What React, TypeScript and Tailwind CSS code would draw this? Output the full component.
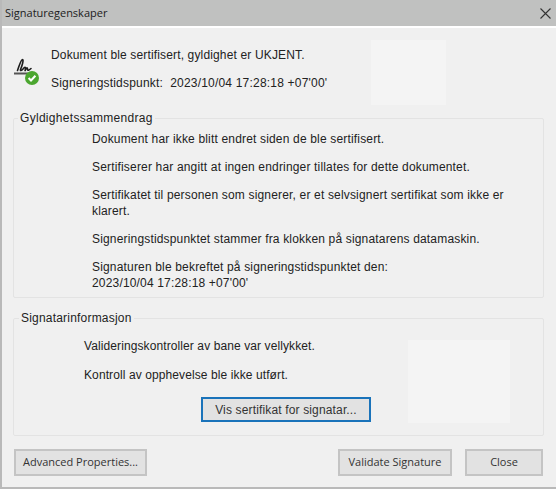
const summary = [
  { text: "Dokument har ikke blitt endret siden de ble sertifisert.", cls: "mt-[6px]" },
  { text: "Sertifiserer har angitt at ingen endringer tillates for dette dokumentet.", cls: "mt-[12px]" },
  { text: "Sertifikatet til personen som signerer, er et selvsignert sertifikat som ikke er klarert.", cls: "mt-[12px]" },
  { text: "Signeringstidspunktet stammer fra klokken på signatarens datamaskin.", cls: "mt-[12px]" },
];

function SignatureIcon() {
  return (
    <svg width="28" height="30" viewBox="0 0 28 30" className="shrink-0">
      <path d="M5.5 13.5 C7.5 8 9 2.5 10.5 2.5 C12 2.5 10 9 8.5 12.5 C8 14 9.5 14 11 12 C12 10.5 13.5 9.5 13.5 11 C13.5 12.5 12.8 14 13.2 13.5 C14 11 15.5 10 15.5 12 C15.5 14 17 13.5 19 11.5" fill="none" stroke="#1c1c1c" strokeWidth="1.6" strokeLinecap="round" />
      <rect x="2" y="15.5" width="14" height="2" fill="#555" />
      <circle cx="20" cy="21" r="7" fill="#4ba62f" />
      <path d="M16.6 21 L19 23.5 L23.4 18.8" fill="none" stroke="#fff" strokeWidth="2" />
    </svg>
  );
}

function DialogButton({ label, cls }: { label: string; cls: string }) {
  return (
    <button type="button" className={`h-[27px] border-2 border-[#c4c4c4] bg-[#e2e2e2] font-['Open_Sans',sans-serif] text-[11px] text-[#333] ${cls}`}>
      {label}
    </button>
  );
}

export default function App() {
  return (
    <div className="relative flex h-[489px] w-[556px] flex-col overflow-hidden border-b-2 border-l-2 border-[#b9b9b9] bg-[#f0f0f0] font-['Liberation_Sans',sans-serif] text-[12px] text-[#222]">
      <div className="-ml-[2px] flex h-[26px] shrink-0 items-center justify-between bg-[#c0c1c0] pl-[5px] pr-[5px]">
        <span className="font-['Open_Sans',sans-serif] text-[11px] text-[#1c1c1c]">Signaturegenskaper</span>
        <svg width="11" height="11" viewBox="0 0 11 11">
          <path d="M0.5 0.5 L10.5 10.5 M10.5 0.5 L0.5 10.5" stroke="#333" strokeWidth="1.1" />
        </svg>
      </div>
      <div className="h-[2px] shrink-0 bg-white" />

      <div className="flex items-start pl-[10px] pt-[20px]">
        <div className="pt-[9px]"><SignatureIcon /></div>
        <div className="pl-[11px]">
          <p className="leading-[14px] tracking-[0.15px]">Dokument ble sertifisert, gyldighet er UKJENT.</p>
          <p className="mt-[14px] leading-[14px] tracking-[0.2px]">Signeringstidspunkt:&nbsp; 2023/10/04 17:28:18 +07'00'</p>
        </div>
      </div>

      <fieldset className="ml-[11px] mt-[21px] h-[187px] w-[531px] rounded-[2px] border border-[#e3e3e3]">
        <legend className="ml-[4px] px-[2px] leading-[14px] tracking-[0.3px]">Gyldighetssammendrag</legend>
        <div className="pl-[78px] pr-[30px] tracking-[0.17px]">
          {summary.map((item) => (
            <p key={item.text} className={`leading-[16px] ${item.cls}`}>{item.text}</p>
          ))}
          <p className="mt-[12px] leading-[16px]">
            Signaturen ble bekreftet på signeringstidspunktet den:
            <br />
            2023/10/04 17:28:18 +07'00'
          </p>
        </div>
      </fieldset>

      <fieldset className="ml-[11px] mt-[13px] h-[125px] w-[531px] rounded-[2px] border border-[#e3e3e3]">
        <legend className="ml-[5px] px-[2px] leading-[14px] tracking-[0.2px]">Signatarinformasjon</legend>
        <div className="pl-[70px] tracking-[0.1px]">
          <p className="mt-[14px] leading-[14px]">Valideringskontroller av bane var vellykket.</p>
          <p className="mt-[15px] leading-[14px]">Kontroll av opphevelse ble ikke utført.</p>
          <button type="button" className="ml-[117px] mt-[15px] h-[25px] w-[170px] border-2 border-[#1a73ba] bg-[#e2e2e2] tracking-[0.15px] text-[#333]">
            Vis sertifikat for signatar...
          </button>
        </div>
      </fieldset>

      <div className="ml-[12px] mt-[13px] flex w-[529px] gap-[13px]">
        <DialogButton label="Advanced Properties..." cls="mr-auto w-[133px]" />
        <DialogButton label="Validate Signature" cls="w-[114px]" />
        <DialogButton label="Close" cls="w-[78px]" />
      </div>

      <div className="absolute left-[369px] top-[40px] h-[65px] w-[75px] bg-[#f4f4f4]" />
      <div className="absolute left-[406px] top-[340px] h-[83px] w-[102px] bg-[#f4f4f4]" />
    </div>
  );
}
